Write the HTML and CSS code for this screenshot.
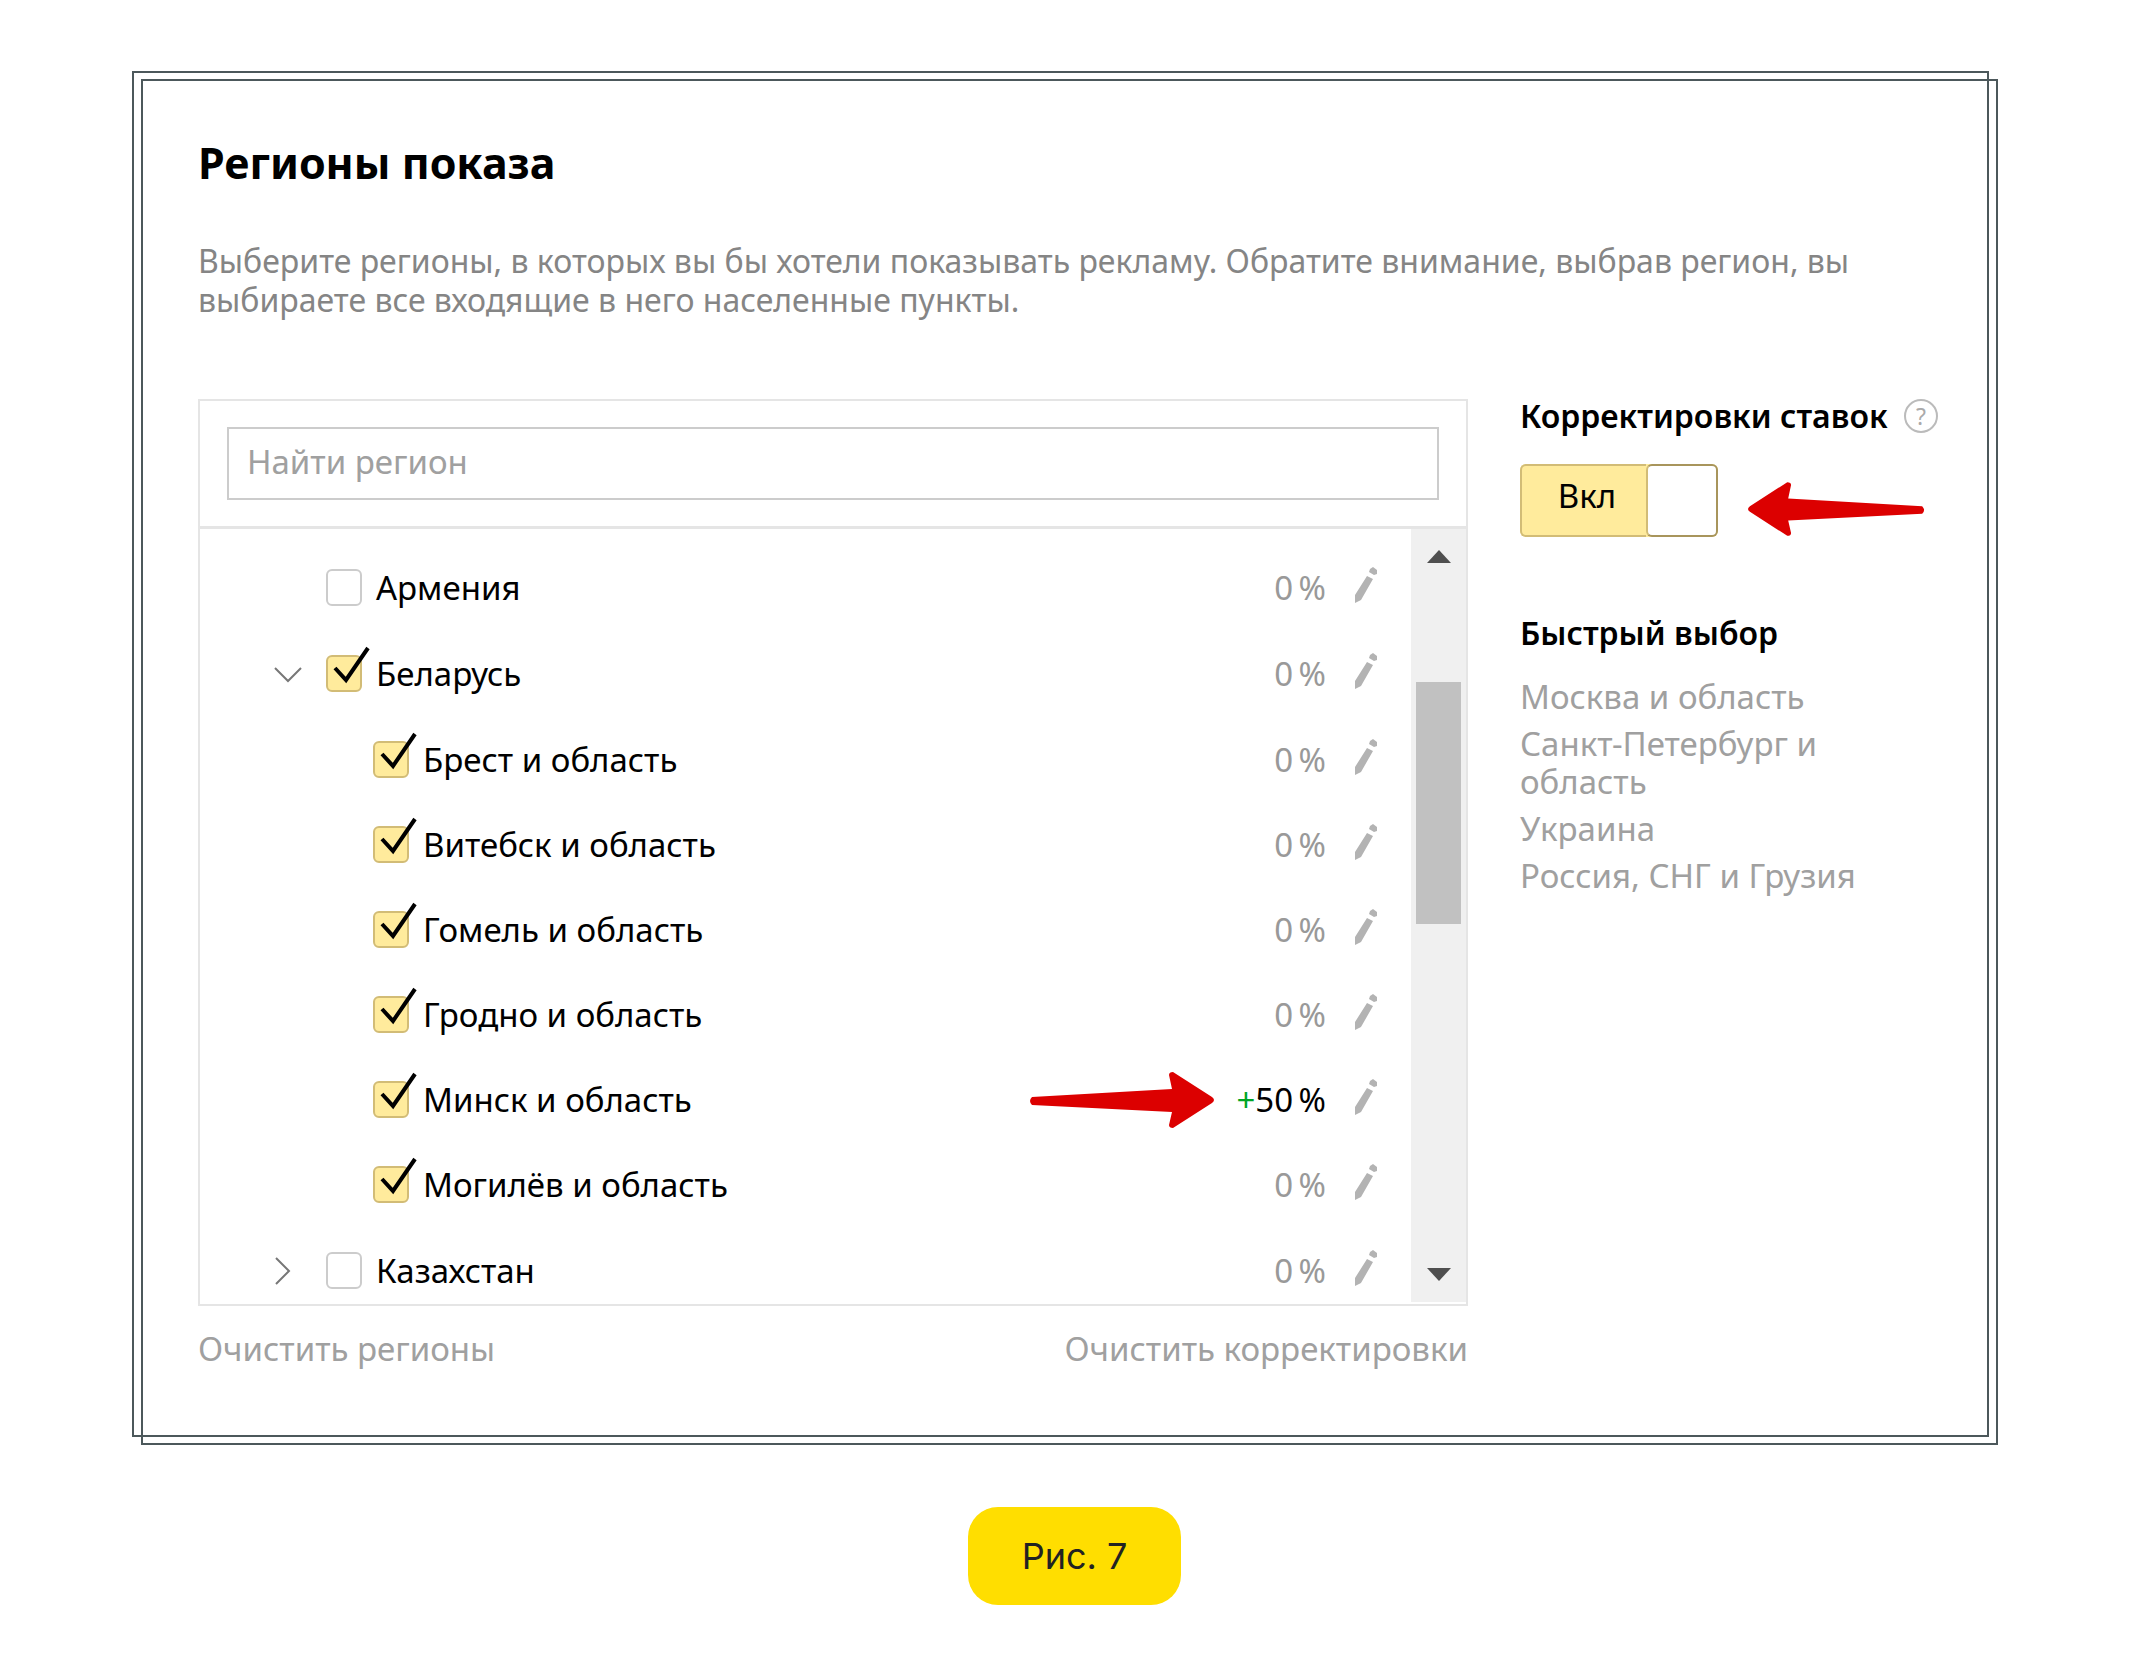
FILE: index.html
```
<!DOCTYPE html>
<html lang="ru">
<head>
    <meta charset="UTF-8">
    <meta name="viewport" content="width=device-width, initial-scale=1.0">
    <title>Регионы показа</title>
    <link rel="stylesheet" href="styles.css">
</head>
<body>
    <svg class="sprite" aria-hidden="true">
        <symbol id="tick" viewBox="0 0 48 48">
            <path d="M9 23 L20 35 L42 3" fill="none" stroke="#000" stroke-width="4"/>
        </symbol>
        <symbol id="pencil" viewBox="0 0 24 36">
            <path d="M16 2 L19 0 L23 3 L23 7 L20 8 L15 5 Z M13 9 L19 12 L7 33 L1 36 L1 28 Z" fill="#b3b3b3"/>
        </symbol>
        <symbol id="arrow" viewBox="0 0 186 56">
            <path d="M4 25 L144 17 L141 3 Q141 0 145 0 L184 25 Q188 28 184 31 L145 56 Q141 56 141 53 L144 40 L4 33 Q0 29 4 25 Z" fill="#dc0000"/>
        </symbol>
    </svg>

    <figure class="figure">
        <div class="frame">
            <h1>Регионы показа</h1>
            <p class="intro">Выберите регионы, в которых вы бы хотели показывать рекламу. Обратите внимание, выбрав регион, вы выбираете все входящие в него населенные пункты.</p>

            <div class="columns">
                <div class="regions">
                    <div class="panel">
                        <div class="search">
                            <input type="text" class="search-input" placeholder="Найти регион" aria-label="Найти регион">
                        </div>
                        <div class="list">
                            <ul class="tree">
                                <li>
                                    <div class="row">
                                        <span class="expander"></span>
                                        <label class="region"><span class="check"><input type="checkbox"><svg><use href="#tick"/></svg></span>Армения</label>
                                        <span class="rate">0&thinsp;%</span>
                                        <button class="edit" aria-label="Изменить"><svg><use href="#pencil"/></svg></button>
                                    </div>
                                </li>
                                <li>
                                    <div class="row">
                                        <button class="expander" aria-label="Свернуть"><svg viewBox="0 0 28 28"><path d="M1 8 L14 21 L27 8"/></svg></button>
                                        <label class="region"><span class="check"><input type="checkbox" checked><svg><use href="#tick"/></svg></span>Беларусь</label>
                                        <span class="rate">0&thinsp;%</span>
                                        <button class="edit" aria-label="Изменить"><svg><use href="#pencil"/></svg></button>
                                    </div>
                                    <ul class="subtree">
                                        <li class="row">
                                            <label class="region"><span class="check"><input type="checkbox" checked><svg><use href="#tick"/></svg></span>Брест и область</label>
                                            <span class="rate">0&thinsp;%</span>
                                            <button class="edit" aria-label="Изменить"><svg><use href="#pencil"/></svg></button>
                                        </li>
                                        <li class="row">
                                            <label class="region"><span class="check"><input type="checkbox" checked><svg><use href="#tick"/></svg></span>Витебск и область</label>
                                            <span class="rate">0&thinsp;%</span>
                                            <button class="edit" aria-label="Изменить"><svg><use href="#pencil"/></svg></button>
                                        </li>
                                        <li class="row">
                                            <label class="region"><span class="check"><input type="checkbox" checked><svg><use href="#tick"/></svg></span>Гомель и область</label>
                                            <span class="rate">0&thinsp;%</span>
                                            <button class="edit" aria-label="Изменить"><svg><use href="#pencil"/></svg></button>
                                        </li>
                                        <li class="row">
                                            <label class="region"><span class="check"><input type="checkbox" checked><svg><use href="#tick"/></svg></span>Гродно и область</label>
                                            <span class="rate">0&thinsp;%</span>
                                            <button class="edit" aria-label="Изменить"><svg><use href="#pencil"/></svg></button>
                                        </li>
                                        <li class="row">
                                            <label class="region"><span class="check"><input type="checkbox" checked><svg><use href="#tick"/></svg></span>Минск и область</label>
                                            <svg class="arrow"><use href="#arrow"/></svg>
                                            <span class="rate rate-set"><span class="plus">+</span>50&thinsp;%</span>
                                            <button class="edit" aria-label="Изменить"><svg><use href="#pencil"/></svg></button>
                                        </li>
                                        <li class="row">
                                            <label class="region"><span class="check"><input type="checkbox" checked><svg><use href="#tick"/></svg></span>Могилёв и область</label>
                                            <span class="rate">0&thinsp;%</span>
                                            <button class="edit" aria-label="Изменить"><svg><use href="#pencil"/></svg></button>
                                        </li>
                                    </ul>
                                </li>
                                <li>
                                    <div class="row">
                                        <button class="expander" aria-label="Развернуть"><svg viewBox="0 0 28 28"><path d="M2 1 L15 14 L2 27"/></svg></button>
                                        <label class="region"><span class="check"><input type="checkbox"><svg><use href="#tick"/></svg></span>Казахстан</label>
                                        <span class="rate">0&thinsp;%</span>
                                        <button class="edit" aria-label="Изменить"><svg><use href="#pencil"/></svg></button>
                                    </div>
                                </li>
                            </ul>
                            <div class="scrollbar">
                                <button class="scroll-btn" aria-label="Вверх"><svg viewBox="0 0 24 13"><path d="M12 0 L24 13 L0 13 Z"/></svg></button>
                                <div class="track"><div class="thumb"></div></div>
                                <button class="scroll-btn" aria-label="Вниз"><svg viewBox="0 0 24 13"><path d="M0 0 L24 0 L12 13 Z"/></svg></button>
                            </div>
                        </div>
                    </div>
                    <div class="actions">
                        <button class="text-btn">Очистить регионы</button>
                        <button class="text-btn">Очистить корректировки</button>
                    </div>
                </div>

                <aside class="side">
                    <div class="side-head">
                        <h2>Корректировки ставок</h2>
                        <button class="help">?</button>
                    </div>
                    <div class="switch-row">
                        <button class="switch" role="switch" aria-checked="true">
                            <span class="switch-text">Вкл</span>
                            <span class="knob"></span>
                        </button>
                        <svg class="arrow arrow-left"><use href="#arrow"/></svg>
                    </div>
                    <h2 class="quick-title">Быстрый выбор</h2>
                    <ul class="quick">
                        <li><a href="#">Москва и область</a></li>
                        <li><a href="#">Санкт-Петербург и область</a></li>
                        <li><a href="#">Украина</a></li>
                        <li><a href="#">Россия, СНГ и Грузия</a></li>
                    </ul>
                </aside>
            </div>
        </div>
        <figcaption><span class="pill">Рис. 7</span></figcaption>
    </figure>
</body>
</html>
```
FILE: styles.css
```
* {
    box-sizing: border-box;
}
body {
    margin: 0;
    background: #fff;
    color: #000;
    font-family: 'Noto Sans', sans-serif;
    font-size: 33px;
    line-height: 38px;
}
h1, h2, p, ul, figure {
    margin: 0;
    padding: 0;
}
ul {
    list-style: none;
}
button {
    background: none;
    border: none;
    padding: 0;
    color: inherit;
    font: inherit;
    cursor: pointer;
}
svg {
    display: block;
}
.sprite {
    position: absolute;
    width: 0;
    height: 0;
}
.figure {
    padding: 71px 145px 74px 132px;
}

/* double outline: the second rectangle is shifted down and right */
.frame {
    position: relative;
    border: 2px solid #4c585b;
    padding: 66px 45px 67px 64px;
}
.frame::after {
    content: '';
    position: absolute;
    top: 6px;
    left: 7px;
    width: 100%;
    height: 100%;
    box-sizing: content-box;
    border: 2px solid #4c585b;
    pointer-events: none;
}
h1 {
    font-size: 43px;
    line-height: 48px;
    font-weight: 700;
}
h2 {
    font-size: 32px;
    line-height: 34px;
    font-weight: 600;
}
.intro {
    margin-top: 54px;
    font-size: 32px;
    line-height: 39px;
    color: #858585;
}
.columns {
    display: grid;
    grid-template-columns: 1fr 422px;
    gap: 52px;
    margin-top: 80px;
}

/* region list */
.panel {
    border: 2px solid #e5e5e5;
}
.search {
    padding: 26px 27px;
    border-bottom: 3px solid #e5e5e5;
}
.search-input {
    display: block;
    width: 100%;
    height: 73px;
    padding: 0 18px 4px;
    border: 2px solid #ccc;
    font: inherit;
    outline: none;
}
.search-input::placeholder {
    color: #a0a0a0;
    opacity: 1;
}
.list {
    display: flex;
    height: 775px;
    overflow: hidden;
}
.tree {
    flex: 1;
    display: flex;
    flex-direction: column;
    gap: 1px;
    padding: 16px 33px 0 74px;
}
.subtree {
    margin-top: 1px;
    padding-left: 99px;
}
.row {
    display: flex;
    align-items: center;
    height: 85px;
}
.expander {
    width: 28px;
    height: 28px;
    margin-right: 24px;
}
.expander svg {
    fill: none;
    stroke: #777;
    stroke-width: 2;
}
.region {
    display: flex;
    align-items: center;
    gap: 14px;
    margin-right: auto;
}
.check {
    position: relative;
}
.check input {
    display: block;
    appearance: none;
    width: 36px;
    height: 37px;
    margin: 0;
    border: 2px solid #ccc;
    border-radius: 6px;
    background: #fff;
}
.check svg {
    display: none;
    position: absolute;
    left: 0;
    top: -10px;
    width: 48px;
    height: 48px;
    pointer-events: none;
}
.check input:checked {
    background: #ffeb9c;
    border-color: #d2bc76;
}
.check input:checked + svg {
    display: block;
}
.rate {
    color: #999;
}
.rate-set {
    margin-left: 22px;
    color: #000;
}
.plus {
    color: #00a524;
}
.edit {
    margin-left: 28px;
    padding-bottom: 6px;
}
.edit svg {
    width: 24px;
    height: 36px;
}
.arrow {
    width: 186px;
    height: 56px;
}
.arrow-left {
    width: 178px;
    transform: scaleX(-1);
}
.scrollbar {
    display: flex;
    flex-direction: column;
    width: 55px;
    margin-bottom: 2px;
    background: #f0f0f0;
}
.scroll-btn {
    display: flex;
    justify-content: center;
    align-items: center;
    height: 55px;
}
.scroll-btn svg {
    width: 24px;
    height: 13px;
    fill: #4f4f4f;
}
.track {
    flex: 1;
    padding: 98px 5px 0;
}
.thumb {
    height: 242px;
    background: #c1c1c1;
}
.actions {
    display: flex;
    justify-content: space-between;
    margin-top: 24px;
}
.text-btn {
    color: #a0a0a0;
}

/* right column */
.side-head {
    display: flex;
    align-items: center;
    justify-content: space-between;
    padding-right: 4px;
}
.help {
    width: 34px;
    height: 34px;
    border: 2px solid #bbb;
    border-radius: 50%;
    color: #aaa;
    font-size: 23px;
    line-height: 28px;
}
.switch-row {
    display: flex;
    align-items: flex-end;
    gap: 30px;
    margin-top: 31px;
}
.switch {
    display: flex;
    width: 198px;
    height: 73px;
    border-radius: 6px;
    background: #ffeb9c;
}
.switch-text {
    flex: 1;
    height: 73px;
    padding-left: 6px;
    border: 2px solid #d2bc76;
    border-right: none;
    border-radius: 6px 0 0 6px;
    line-height: 60px;
}
.knob {
    width: 72px;
    height: 73px;
    border: 2px solid #a8955c;
    border-left-color: #d2bc76;
    border-radius: 6px;
    background: #fff;
}
.quick-title {
    margin-top: 79px;
}
.quick {
    display: flex;
    flex-direction: column;
    gap: 9px;
    margin-top: 28px;
    padding-right: 60px;
}
.quick a {
    color: #a0a0a0;
    text-decoration: none;
}

/* caption */
figcaption {
    display: flex;
    justify-content: center;
    margin-top: 70px;
    padding-left: 28px;
}
.pill {
    padding: 24px 54px;
    border-radius: 30px;
    background: #ffde00;
    color: #222;
    font-family: 'Inter', sans-serif;
    font-size: 36px;
    line-height: 50px;
}
```
